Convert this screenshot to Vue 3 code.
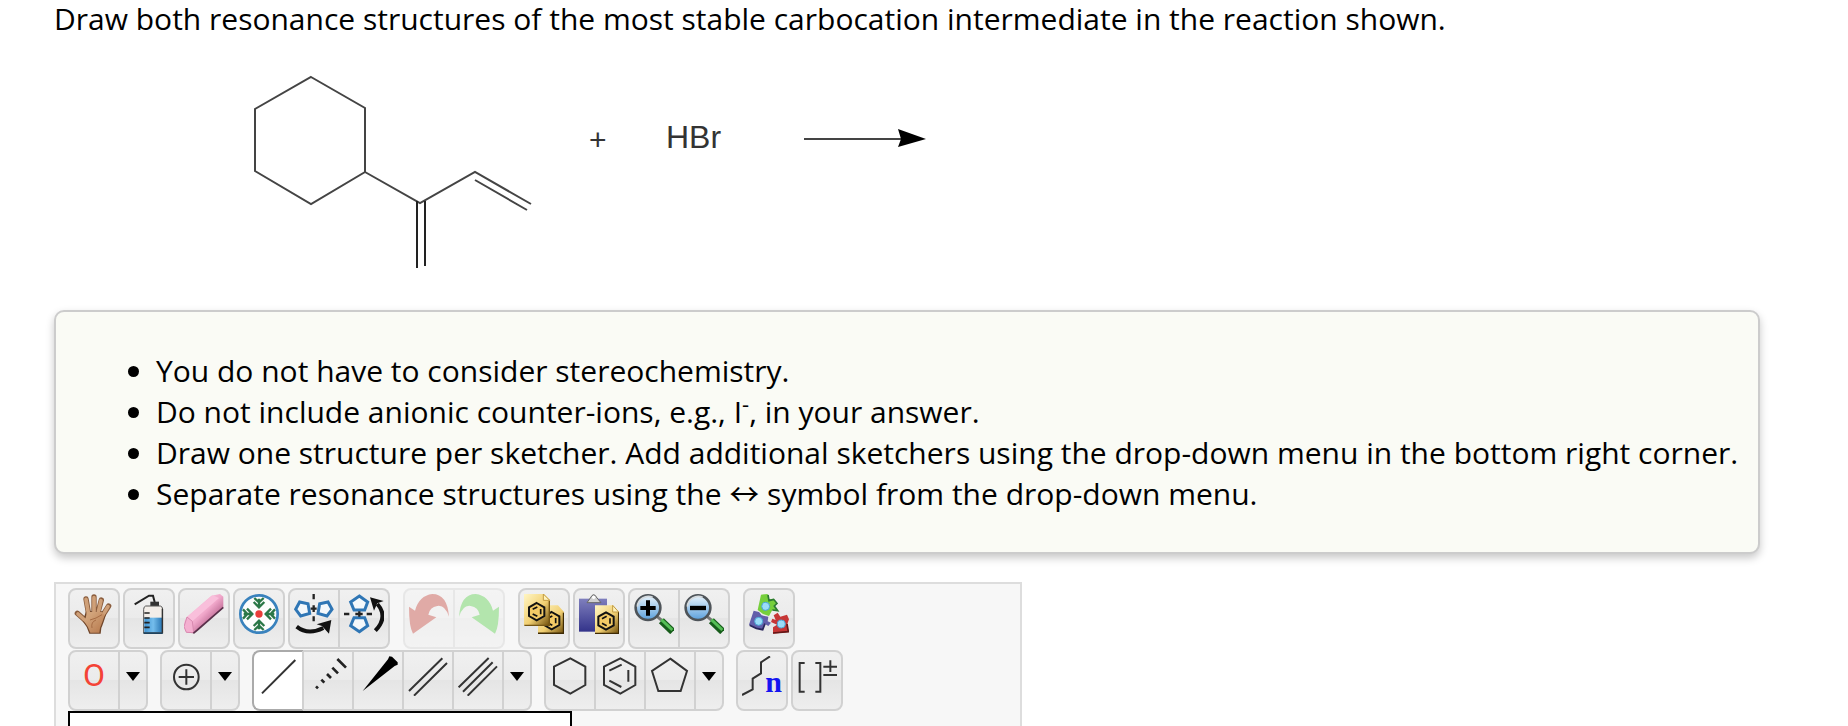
<script setup>
import { ref } from "vue";

const topSections = [
  [
    [{ icon: "hand", title: "Move" }],
    [{ icon: "bottle", title: "Clear" }],
    [{ icon: "eraser", title: "Erase" }],
    [{ icon: "center", title: "Center" }],
    [
      { icon: "flip-h", title: "Flip horizontally" },
      { icon: "flip-v", title: "Flip vertically" },
    ],
  ],
  [
    [
      { icon: "undo", title: "Undo", disabled: true },
      { icon: "redo", title: "Redo", disabled: true },
    ],
  ],
  [
    [{ icon: "copy", title: "Copy" }],
    [{ icon: "paste", title: "Paste" }],
    [
      { icon: "zoom-in", title: "Zoom in" },
      { icon: "zoom-out", title: "Zoom out" },
    ],
  ],
  [[{ icon: "templates", title: "Templates" }]],
];

const bottomSections = [
  [
    [
      { label: "O", title: "Oxygen", className: "oxygen" },
      { icon: "arrow", title: "More elements", menu: true },
    ],
  ],
  [
    [
      { icon: "charge", title: "Increase charge" },
      { icon: "arrow", title: "More attributes", menu: true },
    ],
  ],
  [
    [
      { icon: "single", title: "Single bond" },
      { icon: "hashed", title: "Recessed bond" },
      { icon: "wedge", title: "Protruding bond" },
      { icon: "double", title: "Double bond" },
      { icon: "triple", title: "Triple bond" },
      { icon: "arrow", title: "More bonds", menu: true },
    ],
  ],
  [
    [
      { icon: "hexagon", title: "Cyclohexane ring" },
      { icon: "benzene", title: "Benzene ring" },
      { icon: "pentagon", title: "Cyclopentane ring" },
      { icon: "arrow", title: "More rings", menu: true },
    ],
  ],
  [
    [{ icon: "chain", label: "n", title: "Chain", className: "chain" }],
    [{ icon: "bracket", title: "Bracket charge" }],
  ],
];

const rows = [
  { name: "top", sections: topSections },
  { name: "bottom", sections: bottomSections },
];

const selected = ref("Single bond");
const onSelect = (tool) => {
  if (tool.menu) return;
  selected.value = tool.title;
};
</script>

<template>
  <main class="page">
    <!-- icon shapes -->
    <svg class="defs" aria-hidden="true">
      <defs>
        <linearGradient id="gold" x1="0" y1="0" x2="1" y2="1">
          <stop offset="0" stop-color="#fff6c4" />
          <stop offset="0.55" stop-color="#f1cf72" />
          <stop offset="1" stop-color="#6d4c08" />
        </linearGradient>
        <linearGradient id="purple" x1="0" y1="0" x2="0" y2="1">
          <stop offset="0" stop-color="#7f7fbd" />
          <stop offset="1" stop-color="#33338a" />
        </linearGradient>
        <linearGradient id="pink" x1="0" y1="0" x2="1" y2="1">
          <stop offset="0.2" stop-color="#fbd3e5" />
          <stop offset="0.5" stop-color="#f0a7ca" />
          <stop offset="0.8" stop-color="#a8507c" />
        </linearGradient>
        <linearGradient id="skin" x1="0" y1="0" x2="1" y2="1">
          <stop offset="0.2" stop-color="#d2a47b" />
          <stop offset="0.9" stop-color="#b97c50" />
        </linearGradient>
        <linearGradient id="lens" x1="0" y1="0" x2="0" y2="1">
          <stop offset="0" stop-color="#eaf5fd" />
          <stop offset="1" stop-color="#5a9fdc" />
        </linearGradient>
        <linearGradient id="water" x1="0" y1="0" x2="1" y2="0">
          <stop offset="0" stop-color="#3f93d2" />
          <stop offset="0.5" stop-color="#74bdec" />
          <stop offset="1" stop-color="#2b78b5" />
        </linearGradient>
        <g id="ring">
          <path d="M0-26 23-13V13L0 26-23 13V-13Z" fill="#f3ca66" stroke="#111" stroke-width="6" />
          <path d="M-12-7 2-14M12-8V8M-12 7 2 14" fill="none" stroke="#111" stroke-width="5" />
        </g>
        <g id="inward">
          <path d="M60 14V42M46 12 60 25 74 12M44 24 60 40 76 24" fill="none" stroke="#2b7747" stroke-width="7" />
        </g>
        <g id="magnifier">
          <path d="M70 68 84 80" stroke="#777" stroke-width="9" />
          <path d="M82 80 116 113" stroke="#165c1a" stroke-width="21" />
          <path d="M82 77 115 108" stroke="#55bd55" stroke-width="9" />
          <circle cx="42" cy="41" r="37" fill="url(#lens)" stroke="#4e5459" stroke-width="8" />
          <path d="M10 38A33 33 0 0 1 56 10" fill="none" stroke="#d5dade" stroke-width="5" />
        </g>
      </defs>
      <symbol id="hand" viewBox="0 0 120 120">
        <g fill="none" stroke="#8a5c3c" stroke-linecap="round" stroke-width="16">
          <path d="M44 60 36 15M60 54V9M72 56 82 18M80 74 104 36M46 90 10 58" />
        </g>
        <path d="M36 52H86L96 62Q88 88 82 102L80 119H46Q40 98 26 82Z" fill="#70462a" />
        <g fill="none" stroke="#cfa078" stroke-linecap="round" stroke-width="11">
          <path d="M44 62 36 16M60 56V11M72 58 81 20M80 74 102 38M46 90 12 60" />
        </g>
        <path d="M39 54H83L92 64Q84 88 78 102L76 116H49Q43 98 32 84Z" fill="url(#skin)" />
        <path d="M48 78Q66 74 84 62M54 102Q50 84 66 78" fill="none" stroke="#a66c44" stroke-width="3" />
      </symbol>
      <symbol id="bottle" viewBox="0 0 120 120">
        <path d="M17 31 60 5H72L77 24" fill="none" stroke="#222" stroke-width="6" />
        <path d="M64 23H90V37H64Z" fill="#333" />
        <path d="M50 36H94Q101 38 101 46V118H44V46Q44 38 50 36Z" fill="#f3eee9" stroke="#555" stroke-width="3" />
        <path d="M46 71H99V114H46Z" fill="url(#water)" />
        <path d="M44 117H101" stroke="#113b5b" stroke-width="5" />
        <path d="M46 57H62M46 72H62M46 86H62M46 100H62" stroke="#222" stroke-width="5" />
        <path d="M100 44V116" stroke="#333" stroke-width="4" />
      </symbol>
      <symbol id="eraser" viewBox="0 0 120 120">
        <path d="M2 80 9 68 82 5 108 0 118 8V40L40 108 26 118 7 115 0 98Z" fill="url(#pink)" />
        <path d="M9 69 25 82 105 12 86 4Z" fill="#f9bfdb" />
        <path d="M9 69 25 82 29 116 7 115 0 98Z" fill="#f4afd0" stroke="#d889b0" stroke-width="3" />
        <path d="M118 40 40 108 28 118" fill="none" stroke="#59304a" stroke-width="5" />
      </symbol>
      <symbol id="center" viewBox="0 0 120 120">
        <circle cx="60" cy="60" r="56" fill="#fdfdfd" stroke="#3982bd" stroke-width="8" />
        <use href="#inward" />
        <use href="#inward" transform="rotate(90 60 60)" />
        <use href="#inward" transform="rotate(180 60 60)" />
        <use href="#inward" transform="rotate(270 60 60)" />
        <circle cx="60" cy="60" r="11" fill="#e83d39" />
      </symbol>
      <symbol id="flip-h" viewBox="0 0 120 120">
        <g fill="#f4f8fb" stroke="#2f76b5" stroke-width="9">
          <path d="M5 46 17 24 42 29 47 58 20 66Z" />
          <path d="M114 46 102 24 77 29 72 58 99 66Z" />
        </g>
        <path d="M59 0V16M59 34V54M59 67V82M50 44H68" stroke="#222" stroke-width="7" />
        <path d="M8 98Q42 125 88 102" fill="none" stroke="#111" stroke-width="12" />
        <path d="M112 78 68 91 84 96 105 119Z" fill="#111" />
      </symbol>
      <symbol id="flip-v" viewBox="0 0 120 120">
        <g fill="#f4f8fb" stroke="#2f76b5" stroke-width="9">
          <path d="M46 6 71 24 62 48H30L20 24Z" />
          <path d="M46 113 71 95 62 71H30L20 95Z" />
        </g>
        <path d="M0 60H16M34 60H56M68 60H84M46 52V68" stroke="#222" stroke-width="7" />
        <path d="M94 110Q134 68 100 30" fill="none" stroke="#111" stroke-width="12" />
        <path d="M78 10 119 21 100 28 90 50Z" fill="#111" />
      </symbol>
      <symbol id="undo" viewBox="0 0 120 120">
        <path d="M0 38 18 50Q30 5 70 0 115 0 120 68 108 32 85 36 62 40 58 62L82 70 12 119Q0 98 0 38Z" fill="#c03a30" />
      </symbol>
      <symbol id="redo" viewBox="0 0 120 120">
        <path d="M120 38 102 50Q90 5 50 0 5 0 0 68 12 32 35 36 58 40 62 62L38 70 108 119Q120 98 120 38Z" fill="#4ecb40" />
      </symbol>
      <symbol id="copy" viewBox="0 0 120 120">
        <path d="M42 34H102L120 54V120H42Z" fill="url(#gold)" />
        <path d="M42 118H119V56" fill="none" stroke="#3e2a04" stroke-width="5" />
        <use href="#ring" x="83" y="80" />
        <path d="M0 0H60L78 18V94H0Z" fill="url(#gold)" />
        <path d="M1 94H76V20" fill="none" stroke="#745514" stroke-width="4" />
        <path d="M58 0V19H77Z" fill="#fff3bd" stroke="#c29b42" stroke-width="3" />
        <use href="#ring" x="38" y="53" />
      </symbol>
      <symbol id="paste" viewBox="0 0 120 120">
        <path d="M0 14H84V113H0Z" fill="url(#purple)" />
        <path d="M24 26 34 12Q44-8 54 12L66 26Z" fill="#d0d0d0" stroke="#666" stroke-width="3" />
        <circle cx="44" cy="10" r="5" fill="#fff" />
        <path d="M48 34H102L120 54V119H48Z" fill="url(#gold)" />
        <path d="M48 118H119V54" fill="none" stroke="#3e2a04" stroke-width="4" />
        <path d="M101 34V54H119Z" fill="#fff3bd" stroke="#c29b42" stroke-width="3" />
        <use href="#ring" x="81" y="81" />
      </symbol>
      <symbol id="zoom-in" viewBox="0 0 120 120">
        <use href="#magnifier" />
        <path d="M42 19V65M19 42H65" stroke="#000" stroke-width="12" />
      </symbol>
      <symbol id="zoom-out" viewBox="0 0 120 120">
        <use href="#magnifier" />
        <path d="M18 42H66" stroke="#000" stroke-width="13" />
      </symbol>
      <symbol id="templates" viewBox="0 0 120 120">
        <path d="M36 2 56 0 60 16 74 14 84 26 76 34 86 50 70 48 60 66 42 60 26 48Z" fill="#76cf3c" />
        <path d="M57 3 60 20 74 16 84 28 76 36 86 50 70 48" fill="none" stroke="#2c7932" stroke-width="5" />
        <path d="M14 50 30 54 38 64 58 68 56 82 66 86 58 96 48 90 42 107 20 102 0 92Z" fill="#625eaa" />
        <path d="M2 94 22 103 41 107 48 89" fill="none" stroke="#29265c" stroke-width="5" />
        <path d="M74 64 86 56 94 68 114 62 120 76 114 92 120 114 72 119 72 100 84 92 66 84 70 74 80 78Z" fill="#c63636" />
        <path d="M72 117 118 113 114 90" fill="none" stroke="#651717" stroke-width="5" />
        <g fill="#9bdcf8" stroke="#4aa4d4" stroke-width="3">
          <circle cx="50" cy="37" r="12" />
          <circle cx="29" cy="82" r="12" />
          <circle cx="97" cy="90" r="12" />
        </g>
      </symbol>
      <symbol id="charge" viewBox="0 0 120 120">
        <circle cx="61" cy="63" r="37" class="line" />
        <path class="line" d="M61 40V86M38 63H84" />
      </symbol>
      <symbol id="single" viewBox="0 0 120 120">
        <path class="line" d="M12 112 112 12" />
      </symbol>
      <symbol id="hashed" viewBox="0 0 120 120">
        <path d="M24 91 30 97M40 71 49 80M57 54 69 66M73 35 90 52M88 9 114 35" stroke="#222" stroke-width="8" />
      </symbol>
      <symbol id="wedge" viewBox="0 0 120 120">
        <path d="M14 105 90 10 94 1 102 2 119 19 119 26 110 30Z" fill="#000" />
      </symbol>
      <symbol id="double" viewBox="0 0 120 120">
        <path class="line" d="M3 105 103 7M18 119 117 21" />
      </symbol>
      <symbol id="triple" viewBox="0 0 120 120">
        <path class="line" d="M2 94 92 6M15 107 104 19M29 119 117 31" />
      </symbol>
      <symbol id="hexagon" viewBox="0 0 120 120">
        <path class="line" d="M61 7 106 32V87L61 113 12 87V32Z" />
      </symbol>
      <symbol id="benzene" viewBox="0 0 120 120">
        <path class="line" d="M61 7 106 32V87L61 113 12 87V32ZM28 44 65 26M85 42V77M28 74 64 93" />
      </symbol>
      <symbol id="pentagon" viewBox="0 0 120 120">
        <path class="line" d="M61 8 111 45 92 105H25L6 45Z" />
      </symbol>
      <symbol id="chain" viewBox="0 0 120 120">
        <path class="line" d="M0 117 32 100V68L57 52V19L84 1" />
      </symbol>
      <symbol id="bracket" viewBox="0 0 120 120">
        <path class="line" d="M23 21H8V107H23M55 21H70V107H55M79 32H120M100 13V48M79 57H120" />
      </symbol>
      <symbol id="arrow" viewBox="0 0 14 10">
        <path d="M0 0H14L7 9Z" fill="#000" />
      </symbol>
    </svg>

    <p class="question">
      Draw both resonance structures of the most stable carbocation intermediate
      in the reaction shown.
    </p>

    <!-- reaction scheme -->
    <svg class="reaction" viewBox="54 37 906 273" role="img" aria-label="Diene plus HBr">
      <g fill="none" stroke="#444" stroke-width="2">
        <path d="M311 77 365 108V172L311 204 255 171V109Z" />
        <path d="M365 172 420 203 475 172 531 204M475 180 527 210" />
        <path d="M417 201V268M425 201V266" stroke="#222" />
        <path d="M804 139H902" />
      </g>
      <path d="M898 129 926 139 898 147 901 139Z" fill="#000" />
      <text class="reagent plus" x="589" y="150">+</text>
      <text class="reagent" x="666" y="148">HBr</text>
    </svg>

    <ul class="notes">
      <li>You do not have to consider stereochemistry.</li>
      <li>Do not include anionic counter-ions, e.g., I<sup>-</sup>, in your answer.</li>
      <li>
        Draw one structure per sketcher. Add additional sketchers using the
        drop-down menu in the bottom right corner.
      </li>
      <li>
        Separate resonance structures using the
        <span class="resonance">↔</span> symbol from the drop-down menu.
      </li>
    </ul>

    <section class="sketcher">
      <div v-for="row in rows" :key="row.name" class="tools" :class="row.name">
        <div v-for="(section, s) in row.sections" :key="s" class="section">
          <div
            v-for="(group, g) in section"
            :key="g"
            class="group"
            :class="{ disabled: group[0].disabled }"
          >
            <button
              v-for="tool in group"
              :key="tool.title"
              type="button"
              class="tool"
              :class="[tool.className, { menu: tool.menu, selected: tool.title === selected }]"
              :disabled="tool.disabled"
              :title="tool.title"
              :aria-label="tool.title"
              @click="onSelect(tool)"
            >
              <svg v-if="tool.icon" aria-hidden="true"><use :href="`#${tool.icon}`" /></svg>
              <span v-if="tool.label" class="label">{{ tool.label }}</span>
            </button>
          </div>
        </div>
      </div>
      <div class="canvas"></div>
    </section>
  </main>
</template>

<style>
body {
  margin: 0;
  background: #fff;
}
</style>

<style scoped>
.page {
  display: flex;
  flex-direction: column;
  box-sizing: border-box;
  height: 100vh;
  padding: 0 88px 0 54px;
  overflow: hidden;
  color: #000;
  font-family: "Open Sans", sans-serif;
  font-size: 30px;
}
.defs {
  position: absolute;
  width: 0;
  height: 0;
}
.question {
  margin: 0;
  line-height: 37px;
}
.reaction {
  flex: none;
  width: 906px;
  max-width: 100%;
}
.reagent {
  font-family: "Liberation Sans", sans-serif;
  font-size: 32px;
  fill: #333;
}
.plus {
  font-size: 30px;
}
.notes {
  margin: 0;
  padding: 38px 16px 38px 100px;
  border: 2px solid #ccc;
  border-radius: 10px;
  background: #fafbf5;
  box-shadow: 0 4px 8px rgba(0, 0, 0, 0.22);
  line-height: 41px;
}
.notes sup {
  font-size: 22px;
  line-height: 0;
}
.resonance {
  font-family: "Noto Sans CJK JP", sans-serif;
  line-height: 0;
}
.sketcher {
  display: flex;
  flex: 1;
  flex-direction: column;
  align-items: flex-start;
  box-sizing: border-box;
  width: 968px;
  max-width: 100%;
  margin-top: 28px;
  padding: 4px 12px 0;
  border: 2px solid #ddd;
  border-bottom: 0;
  background: #f7f7f7;
}
.tools {
  display: flex;
  gap: 12px;
}
.tools.top {
  gap: 13px;
  margin-bottom: 1px;
}
.section {
  display: flex;
  gap: 3px;
}
.group {
  display: flex;
}
.group.disabled {
  opacity: 0.4;
}
.tool {
  display: flex;
  justify-content: center;
  align-items: flex-start;
  box-sizing: border-box;
  width: 50px;
  height: 61px;
  padding: 4px 0 0;
  border: 2px solid #d1d1d1;
  border-left-width: 0;
  background: linear-gradient(#f0f0f0, #ebebeb 50%, #e5e5e5 50%, #eeeeee);
}
.tool:first-child {
  width: 52px;
  border-left-width: 2px;
  border-radius: 8px 0 0 8px;
}
.tool:last-child {
  border-radius: 0 8px 8px 0;
}
.tool:only-child {
  border-radius: 8px;
}
.tool svg {
  flex: none;
  width: 40px;
  height: 40px;
}
.tool.menu {
  width: 28px;
  padding-top: 20px;
}
.tool.menu svg {
  width: 14px;
  height: 10px;
}
.tool.selected {
  border-color: #aaa #d1d1d1 #aaa #aaa;
  background: #fff;
}
.line {
  fill: none;
  stroke: #333;
  stroke-width: 6;
}
.oxygen .label {
  color: #f44336;
  font-family: Roboto, sans-serif;
  font-size: 32px;
  line-height: 38px;
}
/* the subscript lies over the end of the chain */
.chain {
  position: relative;
}
.chain .label {
  position: absolute;
  right: 4px;
  bottom: 12px;
  color: #1414f0;
  font-family: "Liberation Serif", serif;
  font-size: 30px;
  font-weight: bold;
  line-height: 30px;
}
.canvas {
  flex: 1;
  box-sizing: border-box;
  width: 504px;
  max-width: 100%;
  border: 2px solid #000;
  border-bottom: 0;
  background: #fff;
}
</style>
